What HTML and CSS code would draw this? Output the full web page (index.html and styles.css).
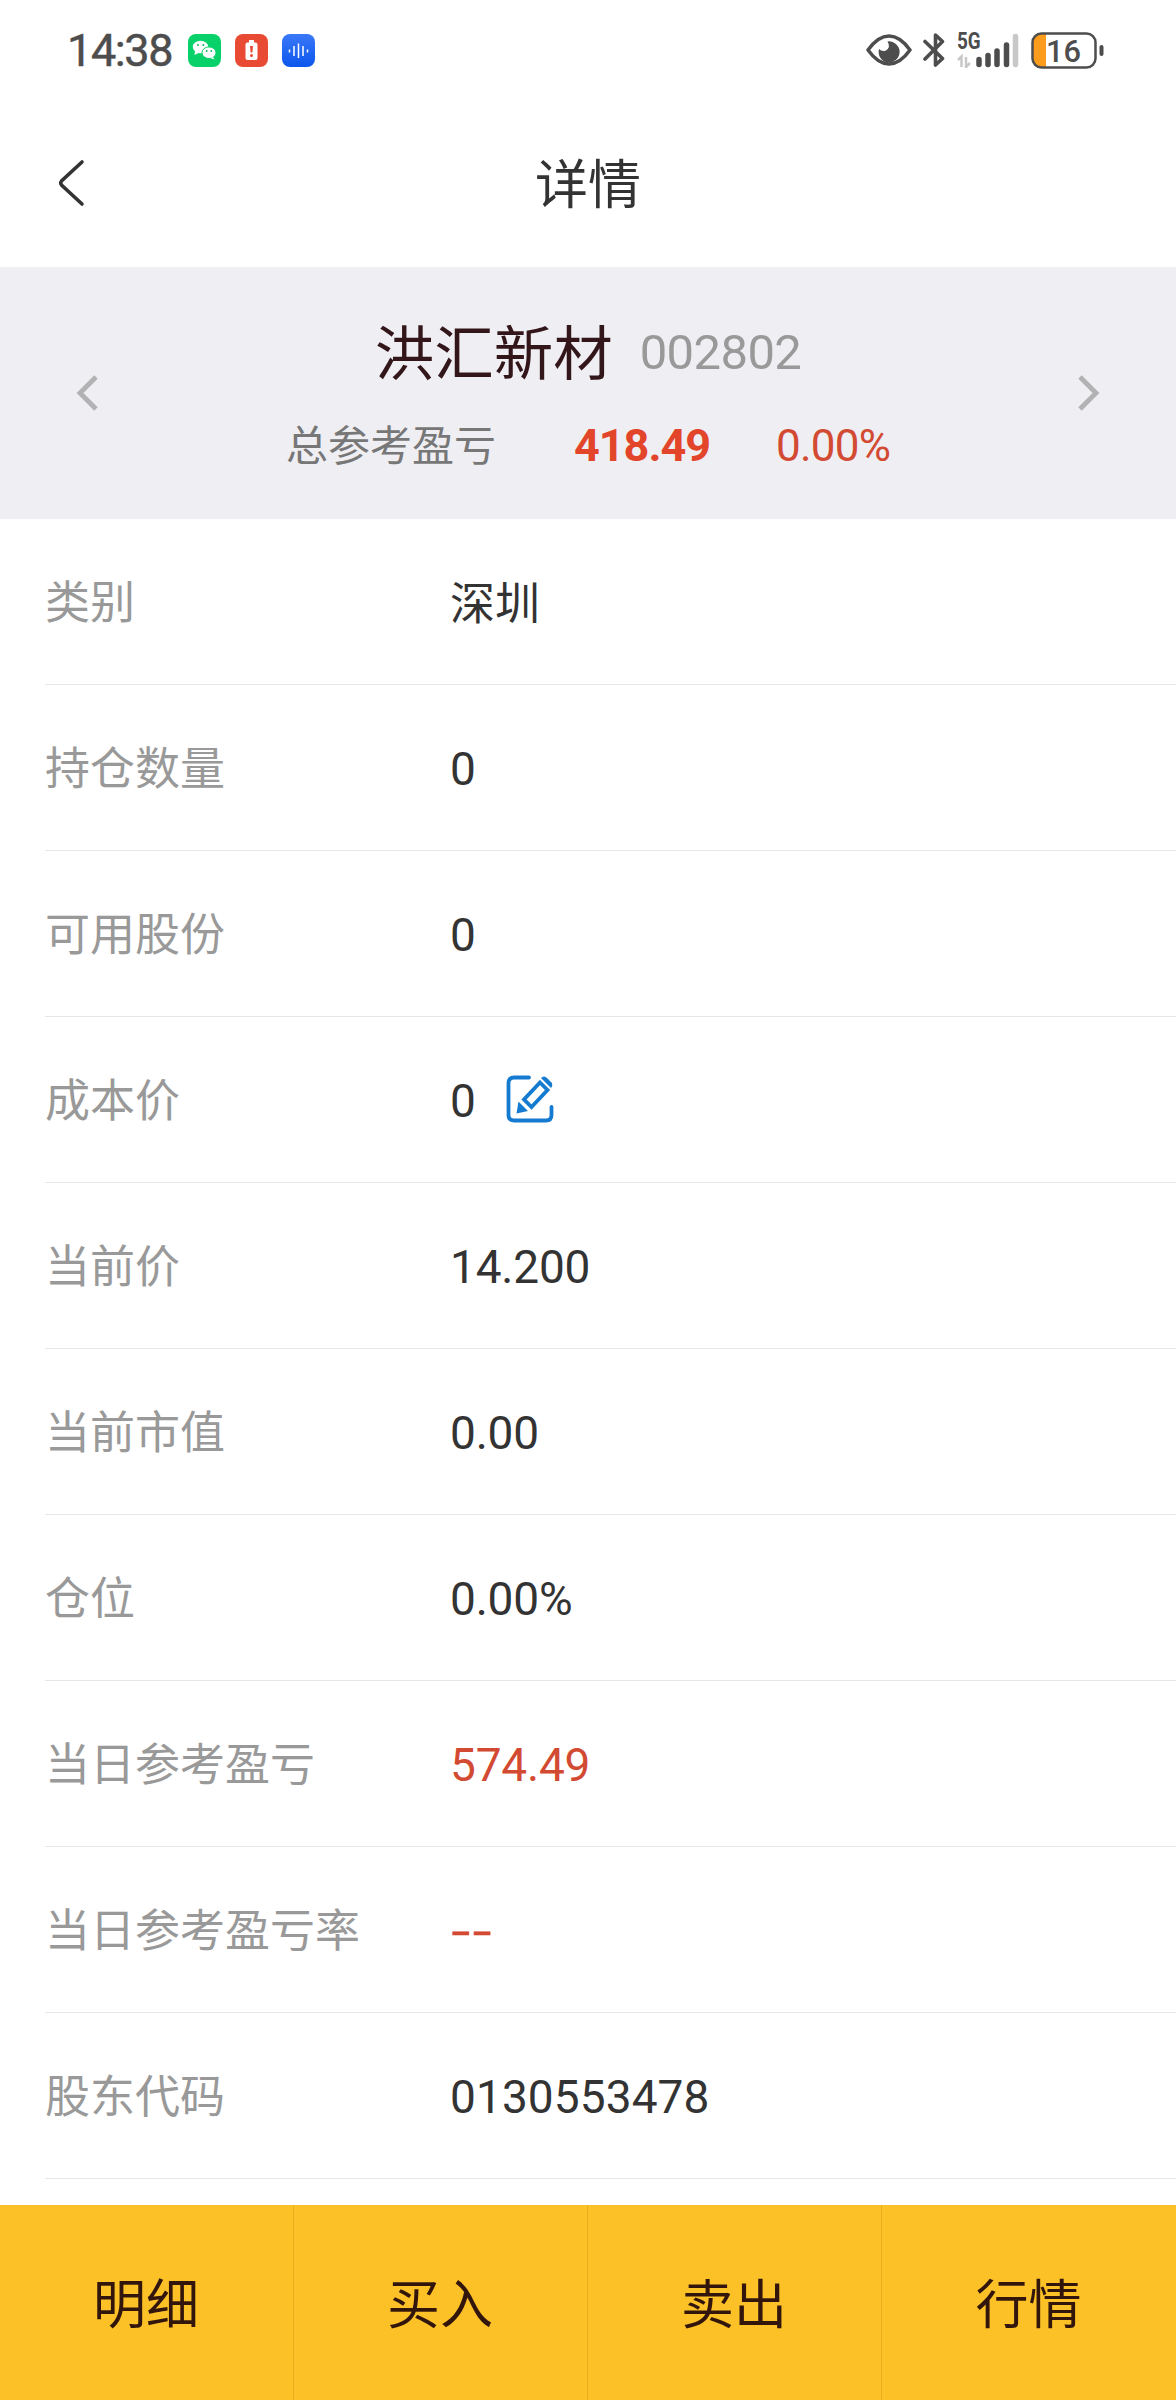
FILE: index.html
```html
<!DOCTYPE html>
<html lang="zh-CN">
<head>
<meta charset="utf-8">
<title>详情</title>
<link rel="stylesheet" href="styles.css">
</head>
<body>
<div class="screen">
  <header class="status">
    <span class="clock">14:38</span>
    <svg class="app" viewBox="0 0 33 33"><rect width="33" height="33" rx="8" fill="#07d168"/><ellipse cx="12.500" cy="13" rx="7.700" ry="6.300" fill="#fff"/><path d="M7 17l-.5 4 4-2z" fill="#fff"/><ellipse cx="21" cy="18.700" rx="7" ry="5.800" fill="#fff" stroke="#07d168" stroke-width="1"/><path d="M25 23l1.500 2.500-4.500-1.500z" fill="#fff"/><g fill="#07b85c"><circle cx="10" cy="11" r="1"/><circle cx="15.300" cy="11" r="1"/><circle cx="18.700" cy="17" r=".9"/><circle cx="23.300" cy="17" r=".9"/></g></svg>
    <svg class="app" viewBox="0 0 33 33"><rect width="33" height="33" rx="8" fill="#e84a33"/><path d="M14 6h5v2.500h1.500a2 2 0 0 1 2 2V24a2 2 0 0 1-2 2h-8a2 2 0 0 1-2-2V10.500a2 2 0 0 1 2-2H14z" fill="#fff"/><path d="M15 12h3l-.6 6.500h-1.800z" fill="#e84a33"/><circle cx="16.500" cy="21.500" r="1.500" fill="#e84a33"/></svg>
    <svg class="app" viewBox="0 0 33 33"><defs><linearGradient id="blue" x2="0" y2="1"><stop stop-color="#3a78f8"/><stop offset="1" stop-color="#0c56ed"/></linearGradient></defs><rect width="33" height="33" rx="8" fill="url(#blue)"/><path d="M7.500 15.500v3M12 12v10M16.500 9.500v14.500M21 12v10M25.500 15.500v3" stroke="#fff" stroke-width="1.500"/></svg>
    <span class="spacer"></span>
    <svg class="eye" viewBox="0 0 46 32"><path d="M2 16Q12 2 23 2T44 16Q34 30 23 30T2 16Z" fill="none" stroke="#4d4d4d" stroke-width="3.500" stroke-linejoin="round"/><path d="M21.500 7.500A10.500 10.500 0 1 1 13 15Q16 18 20 16.500Q25 13 21.500 7.500Z" fill="#4d4d4d"/></svg>
    <svg class="bt" viewBox="0 0 22 34"><path d="M2 8.500L19.500 25.500 12.500 32V2L19.500 8.500 2 26" fill="none" stroke="#4d4d4d" stroke-width="3.600" stroke-linejoin="round" stroke-linecap="round"/></svg>
    <div class="signal">
      <span class="net">5G</span>
      <svg viewBox="0 0 62 35"><path d="M1 27l3.500-3.500V34M9 24v10l4-4" fill="none" stroke="#c8c8c8" stroke-width="2.500"/><g stroke-width="5.500" stroke-linecap="round" stroke="#4d4d4d"><path d="M22 26.500v5M31 22.500v9M40 18v13.500M49.500 12v19.500"/><path d="M58.500 3.500v28" stroke="#c8c8c8"/></g></svg>
    </div>
    <svg class="battery" viewBox="0 0 74 37"><path d="M15 2H10Q2 2 2 10V27Q2 35 10 35H15z" fill="#fc9c1c"/><rect x="1.500" y="1.500" width="63" height="34" rx="9" fill="none" stroke="#4d4d4d" stroke-width="2.500"/><path d="M70.500 15v7" stroke="#4d4d4d" stroke-width="4" stroke-linecap="round"/><text class="charge" x="15" y="30" textLength="35" lengthAdjust="spacingAndGlyphs">16</text></svg>
  </header>
  <nav class="title-bar">
    <svg class="back" viewBox="0 0 28 48"><path d="M25 3L4.500 22Q3 24 4.500 26L25 45" fill="none" stroke="#333" stroke-width="3.600" stroke-linecap="round"/></svg>
    <h1>详情</h1>
  </nav>
  <section class="summary">
    <svg class="arrow" viewBox="0 0 22 36"><path d="M20 2L4 18 20 34" fill="none" stroke="#b2b2b4" stroke-width="4.800"/></svg>
    <div class="stock">
      <div class="stock-name"><span class="name">洪汇新材</span><span class="code">002802</span></div>
      <div class="profit"><span class="caption">总参考盈亏</span><b class="gain">418.49</b><span class="rate">0.00%</span></div>
    </div>
    <svg class="arrow" viewBox="0 0 22 36"><path d="M2 2l16 16L2 34" fill="none" stroke="#b2b2b4" stroke-width="4.800"/></svg>
  </section>
  <dl class="details">
    <div class="row"><dt>类别</dt><dd class="zh">深圳</dd></div>
    <div class="row"><dt>持仓数量</dt><dd>0</dd></div>
    <div class="row"><dt>可用股份</dt><dd>0</dd></div>
    <div class="row"><dt>成本价</dt><dd>0<svg class="edit" viewBox="0 0 48 48"><path d="M23 2.500H8Q2.500 2.500 2.500 8V40Q2.500 45.500 8 45.500H40Q45.500 45.500 45.500 40V32" fill="none" stroke="#147bd1" stroke-width="3.800" stroke-linecap="round"/><path d="M34 7.500L41.500 15 25.500 32 18 24.500Z" fill="none" stroke="#147bd1" stroke-width="3.800"/><path d="M12.500 26.500L22 36 10.500 38.500Z M35 3Q38 0 41 3L46 8Q47 11 45 13Z" fill="#147bd1"/></svg></dd></div>
    <div class="row"><dt>当前价</dt><dd>14.200</dd></div>
    <div class="row"><dt>当前市值</dt><dd>0.00</dd></div>
    <div class="row"><dt>仓位</dt><dd>0.00%</dd></div>
    <div class="row"><dt>当日参考盈亏</dt><dd class="red">574.49</dd></div>
    <div class="row"><dt>当日参考盈亏率</dt><dd class="red dashes">--</dd></div>
    <div class="row"><dt>股东代码</dt><dd class="account">0130553478</dd></div>
  </dl>
  <footer class="actions">
    <button>明细</button><button>买入</button><button>卖出</button><button>行情</button>
  </footer>
</div>
</body>
</html>
```

FILE: styles.css
```css
* { box-sizing: border-box; }
body { margin: 0; background: #fff; color: #333; font-family: "Noto Sans CJK SC", sans-serif; }
.screen { width: 1176px; height: 2400px; display: flex; flex-direction: column; overflow: hidden; }
svg { display: block; flex: none; }

.status { height: 100px; display: flex; align-items: center; padding: 0 71px 0 67px; color: #4d4d4d; }
.clock { width: 121px; padding-top: 2px; font: 400 45px/98px Roboto, sans-serif; letter-spacing: -1.4px; -webkit-text-stroke: 0.5px #4d4d4d; }
.app { width: 33px; height: 33px; margin-right: 14px; }
.spacer { flex: 1; }
.eye { width: 46px; height: 32px; }
.bt { width: 22px; height: 34px; margin-left: 11px; }
.signal { display: grid; width: 62px; height: 35px; margin-left: 12px; }
.signal > * { grid-area: 1 / 1; }
.battery { width: 74px; height: 37px; margin-left: 12px; }
.net { font: 700 23px/18px Roboto, sans-serif; transform: scaleX(0.82); transform-origin: left; }
.charge { font: 500 32px Roboto, sans-serif; fill: #4d4d4d; }

.title-bar { height: 167px; display: grid; grid-template-columns: 56px 1fr 56px; align-items: center; padding: 0 30px 2px; }
.back { width: 28px; height: 48px; margin-left: 27px; }
h1 { margin: 0; text-align: center; font-size: 53px; font-weight: 400; line-height: 78px; padding-bottom: 3px; }

.summary { height: 252px; padding: 0 76px; display: flex; align-items: center; justify-content: space-between; background: #efeef3; }
.arrow { width: 22px; height: 36px; }
.stock { padding-top: 10px; }
.stock-name { display: flex; align-items: center; justify-content: center; gap: 27px; height: 88px; color: #32161a; }
.name { font-size: 59.500px; }
.code { padding-top: 7px; font: 49px Roboto, sans-serif; letter-spacing: -0.6px; color: #999; }
.profit { display: flex; align-items: center; justify-content: center; height: 98px; font-size: 42px; color: #777; }
.gain { margin-left: 78px; padding-top: 7px; font: 700 45px Roboto, sans-serif; color: #e2452a; letter-spacing: -1px; }
.rate { margin-left: 66px; padding-top: 7px; font: 44px Roboto, sans-serif; letter-spacing: -0.8px; color: #d34a32; }

.details { margin: 0; padding-left: 45px; height: 1686px; }
.row { height: 166px; display: flex; align-items: center; border-bottom: 1px solid #e6e6e6; font-size: 45px; }
dt { width: 405px; padding-bottom: 4px; color: #999; }
dd { margin: 0; padding-top: 3px; display: flex; align-items: center; font: 46px Roboto, sans-serif; letter-spacing: -0.2px; }
.zh { padding: 0 0 3px; font: 45px "Noto Sans CJK SC", sans-serif; letter-spacing: 0; }
.account { letter-spacing: 0.1px; }
.red { color: #d34a32; }
.dashes { padding: 0 0 6px; font: 45px "Noto Sans CJK SC", sans-serif; transform: scaleX(1.38); transform-origin: left; -webkit-text-stroke: 0.6px #d34a32; }
.edit { width: 48px; height: 48px; margin: -5px 0 0 30px; }

.actions { height: 195px; display: grid; grid-template-columns: repeat(4, 1fr); background: #fcc127; }
button { border: 0; border-right: 1px solid #e6ad1f; padding: 0 1px 4px 0; background: none; font: 53px "Noto Sans CJK SC", sans-serif; color: #32160c; }
button:last-child { border-right: 0; }
```
